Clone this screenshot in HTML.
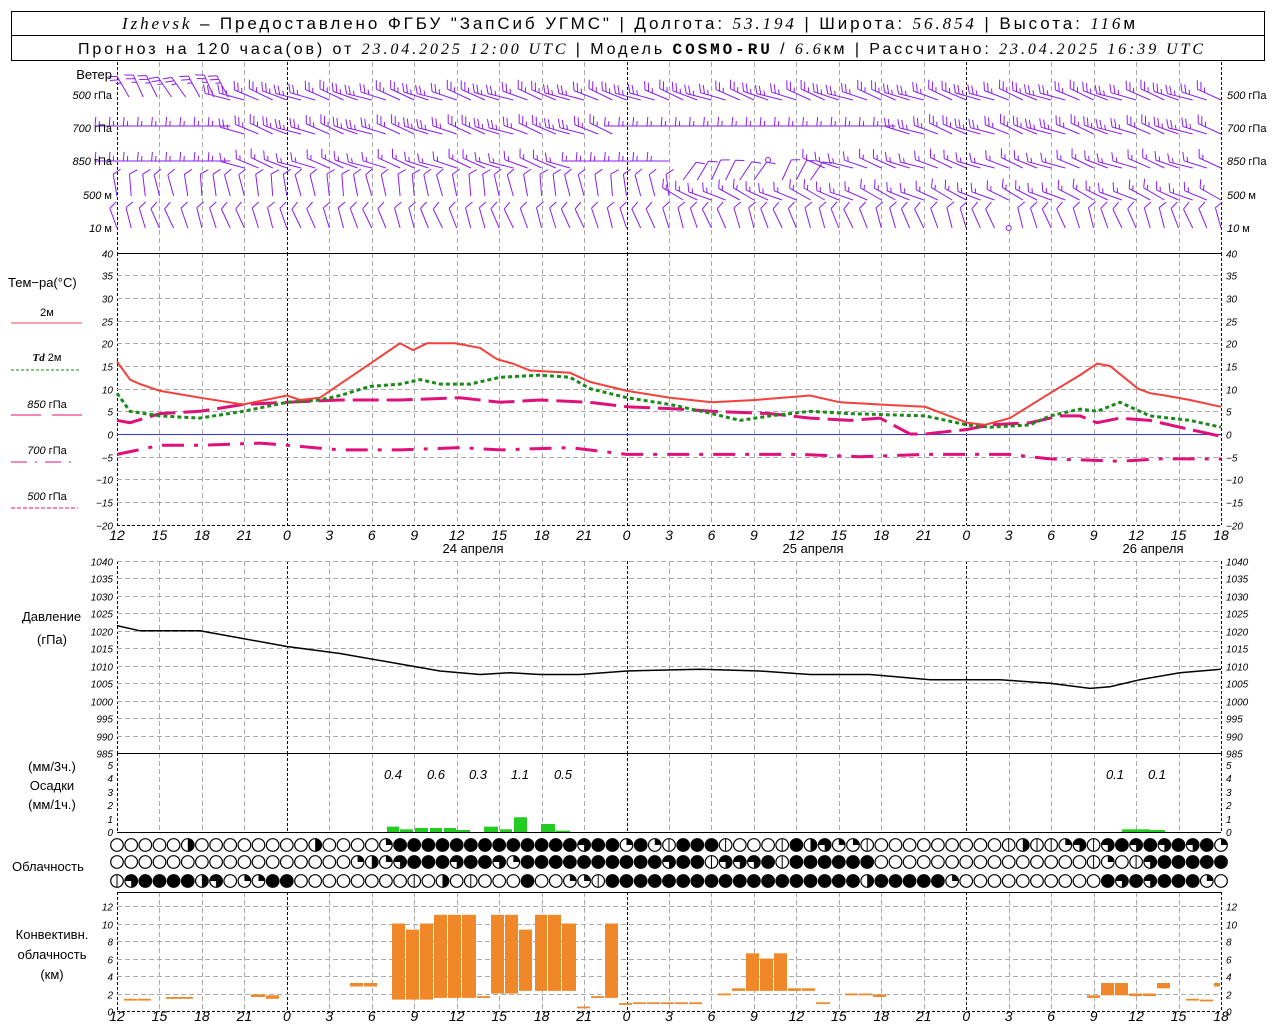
<!DOCTYPE html>
<html><head><meta charset="utf-8"><style>
html,body{margin:0;padding:0;background:#fff;}
svg{display:block;font-family:"Liberation Sans",sans-serif;}
.t{font-style:italic;font-size:10px;}
.lab{font-size:13px;}
</style></head><body>
<svg id="s" width="1280" height="1024" viewBox="0 0 1280 1024" xmlns="http://www.w3.org/2000/svg">
<rect x="0" y="0" width="1280" height="1024" fill="#fff"/>
<rect x="11.5" y="11.5" width="1253" height="49" fill="none" stroke="#000"/>
<line x1="11" y1="35.5" x2="1265" y2="35.5" stroke="#000"/>
<text x="122" y="29" font-size="17" textLength="1013" lengthAdjust="spacing"><tspan font-family="Liberation Serif" font-style="italic">Izhevsk</tspan> – Предоставлено ФГБУ "ЗапСиб УГМС" | Долгота: <tspan font-family="Liberation Serif" font-style="italic">53.194</tspan> | Широта: <tspan font-family="Liberation Serif" font-style="italic">56.854</tspan> | Высота: <tspan font-family="Liberation Serif" font-style="italic">116</tspan>м</text>
<text x="78" y="54" font-size="16" textLength="1125" lengthAdjust="spacing">Прогноз на 120 часа(ов) от <tspan font-family="Liberation Serif" font-style="italic">23.04.2025 12:00 UTC</tspan>  | Модель <tspan font-family="Liberation Mono" font-weight="bold">COSMO-RU</tspan> / <tspan font-family="Liberation Serif" font-style="italic">6.6</tspan>км | Рассчитано: <tspan font-family="Liberation Serif" font-style="italic">23.04.2025 16:39 UTC</tspan></text>
<g id="grid"></g>
<g id="data"></g>
<g class="lab">
<text x="112" y="79" text-anchor="end">Ветер</text>
<text x="8" y="287">Тем−ра(°С)</text>
<text x="47" y="316" text-anchor="middle" font-size="11">2м</text>
<line x1="11" y1="323" x2="82" y2="323" stroke="#f44" stroke-width="1"/>
<text x="47" y="361" text-anchor="middle" font-size="11"><tspan font-family="Liberation Serif" font-style="italic" font-weight="bold">Td</tspan>  2м</text>
<line x1="11" y1="370" x2="80" y2="370" stroke="#1a8a1a" stroke-dasharray="3,2"/>
<text x="47" y="408" text-anchor="middle" font-size="11"><tspan font-style="italic">850</tspan> гПа</text>
<line x1="11" y1="415" x2="41" y2="415" stroke="#e0107a"/><line x1="52" y1="415" x2="82" y2="415" stroke="#e0107a"/>
<text x="47" y="454" text-anchor="middle" font-size="11"><tspan font-style="italic">700</tspan> гПа</text>
<line x1="11" y1="462" x2="78" y2="462" stroke="#e0107a" stroke-dasharray="16,8,2,8"/>
<text x="47" y="500" text-anchor="middle" font-size="11"><tspan font-style="italic">500</tspan> гПа</text>
<line x1="11" y1="508" x2="78" y2="508" stroke="#e0107a" stroke-dasharray="4,2"/>
<text x="22" y="621">Давление</text>
<text x="52" y="644" text-anchor="middle">(гПа)</text>
<text x="52" y="771" text-anchor="middle">(мм/3ч.)</text>
<text x="52" y="790" text-anchor="middle">Осадки</text>
<text x="52" y="809" text-anchor="middle">(мм/1ч.)</text>
<text x="12" y="871">Облачность</text>
<text x="52" y="939" text-anchor="middle">Конвективн.</text>
<text x="52" y="959" text-anchor="middle">облачность</text>
<text x="52" y="979" text-anchor="middle">(км)</text>
<g font-size="11">
<text x="112" y="99" text-anchor="end"><tspan font-style="italic">500</tspan> гПа</text>
<text x="112" y="132" text-anchor="end"><tspan font-style="italic">700</tspan> гПа</text>
<text x="112" y="165" text-anchor="end"><tspan font-style="italic">850</tspan> гПа</text>
<text x="112" y="199" text-anchor="end"><tspan font-style="italic">500</tspan> м</text>
<text x="112" y="232" text-anchor="end"><tspan font-style="italic">10</tspan>   м</text>
<text x="1227" y="99"><tspan font-style="italic">500</tspan> гПа</text>
<text x="1227" y="132"><tspan font-style="italic">700</tspan> гПа</text>
<text x="1227" y="165"><tspan font-style="italic">850</tspan> гПа</text>
<text x="1227" y="199"><tspan font-style="italic">500</tspan> м</text>
<text x="1227" y="232"><tspan font-style="italic">10</tspan>   м</text>
</g>
<text x="473" y="553" text-anchor="middle">24 апреля</text>
<text x="813" y="553" text-anchor="middle">25 апреля</text>
<text x="1153" y="553" text-anchor="middle">26 апреля</text>
<g font-style="italic" font-size="13" text-anchor="middle">
<text x="393" y="779">0.4</text><text x="436" y="779">0.6</text><text x="478" y="779">0.3</text>
<text x="520" y="779">1.1</text><text x="563" y="779">0.5</text><text x="1115" y="779">0.1</text><text x="1157" y="779">0.1</text>
</g>
</g>
<g id="ticks"></g>
</svg>
<script>
function X(i){return 117+i*1104/78;}
var G=document.getElementById('grid'),D=document.getElementById('data'),T=document.getElementById('ticks');
var gs="",ds="",ts="";
function ln(x1,y1,x2,y2,st){return '<line x1="'+x1+'" y1="'+y1+'" x2="'+x2+'" y2="'+y2+'" '+st+'/>';}
var gray='stroke="#aaa" stroke-dasharray="5,3"', blk='stroke="#000" stroke-dasharray="3,2"';
var panels=[[62,253],[253,525],[561,753],[753,832],[892,1011]];
panels.forEach(function(p){
 for(var h=0;h<=78;h+=3){var x=Math.round(X(h))+.5;
  var st=(h==12||h==36||h==60)?blk:gray; if(h==0||h==78)st=blk;
  gs+=ln(x,p[0],x,p[1],st);}
});
function TY(t){return 434-t*4.533;}
for(var t=-20;t<=40;t+=5){var y=Math.round(TY(t))+.5;
 if(t<40&&t>-20)gs+=ln(117,y,1221,y,gray);
 ts+='<text class="t" x="113" y="'+(y+4)+'" text-anchor="end">'+(t<0?'−'+(-t):t)+'</text>';
 ts+='<text class="t" x="1226" y="'+(y+4)+'">'+(t<0?'−'+(-t):t)+'</text>';}
gs+=ln(117,253.5,1221,253.5,'stroke="#000"')+ln(117,525.5,1221,525.5,blk)+ln(117,434.5,1221,434.5,'stroke="#33f" stroke-width="1"');
function PY(p){return 561+(1040-p)*3.491;}
for(var p=985;p<=1040;p+=5){var y=Math.round(PY(p))+.5;
 if(p>985)gs+=ln(117,y,1221,y,gray);
 ts+='<text class="t" x="113" y="'+(y+4)+'" text-anchor="end" font-size="9">'+p+'</text>';
 ts+='<text class="t" x="1226" y="'+(y+4)+'" font-size="9">'+p+'</text>';}
gs+=ln(117,753.5,1221,753.5,'stroke="#000"')+ln(117,832.5,1221,832.5,'stroke="#000"')+ln(117,892.5,1221,892.5,'stroke="#000"')+ln(117,1011.5,1221,1011.5,blk);
for(var v=0;v<=5;v++){var y=Math.round(832-v*13.4);
 ts+='<text class="t" x="113" y="'+(y+4)+'" text-anchor="end">'+v+'</text><text class="t" x="1226" y="'+(y+4)+'">'+v+'</text>';}
function CY(k){return 1011-k*8.75;}
for(var k=0;k<=12;k+=2){var y=Math.round(CY(k))+.5;
 if(k>0)gs+=ln(117,y,1221,y,gray);
 ts+='<text class="t" x="113" y="'+(y+4)+'" text-anchor="end">'+k+'</text><text class="t" x="1226" y="'+(y+4)+'">'+k+'</text>';}
var hl=[12,15,18,21,0,3,6,9,12,15,18,21,0,3,6,9,12,15,18,21,0,3,6,9,12,15,18];
hl.forEach(function(h,j){var x=X(j*3);
 ts+='<text x="'+x+'" y="540" text-anchor="middle" font-style="italic" font-size="14">'+h+'</text>';
 ts+='<text x="'+x+'" y="1021" text-anchor="middle" font-style="italic" font-size="14">'+h+'</text>';});
function poly(pts,fy,st){return '<polyline fill="none" points="'+pts.map(function(q){return q[0]+','+fy(q[1]).toFixed(1)}).join(' ')+'" '+st+'/>';}
var red=[[117,16],[130,12],[140,11],[160,9.5],[200,8],[243,6.5],[287,8.5],[300,7.5],[320,8],[400,20],[413,18.5],[427,20],[455,20],[480,19],[497,16.5],[513,15.5],[530,14],[570,13.5],[590,11.5],[627,9.5],[670,8],[712,7],[755,7.5],[810,8.5],[840,7],[880,6.5],[925,6],[967,2.5],[985,2],[1010,3.5],[1050,9],[1080,13],[1097,15.5],[1110,15],[1138,10],[1150,9],[1165,8.5],[1190,7.5],[1221,6]];
var grn=[[117,9],[130,5],[160,4],[200,3.5],[243,5],[287,7],[320,7.5],[340,8.5],[370,10.5],[400,11],[420,12],[440,11],[470,11],[500,12.5],[540,13],[570,12.5],[590,10],[627,8],[670,6.5],[712,4.5],[740,3],[770,4],[810,5],[850,4.5],[925,4],[967,2],[990,1.5],[1030,2],[1050,4],[1080,5.5],[1097,5],[1120,7],[1150,4],[1190,3],[1221,1.5]];
var p850=[[117,3],[130,2.5],[160,4.5],[200,5],[243,6.5],[287,7],[340,7.5],[400,7.5],[460,8],[500,7],[540,7.5],[590,7],[627,6],[680,5.5],[712,5],[770,4.5],[810,3.5],[850,3],[880,3.5],[910,0],[925,0],[967,1],[990,2],[1030,2.5],[1060,4],[1080,4],[1097,2.5],[1120,3.5],[1150,3],[1190,1],[1221,-0.5]];
var p700=[[117,-4.5],[160,-2.5],[200,-2.5],[260,-2],[287,-2.5],[340,-3.5],[400,-3.5],[460,-3],[500,-3.5],[570,-3],[627,-4.5],[700,-4.5],[800,-4.5],[860,-5],[925,-4.5],[1010,-4.5],[1050,-5.5],[1120,-6],[1160,-5.5],[1221,-5.5]];
ds+=poly(p700,TY,'stroke="#e0107a" stroke-width="3" stroke-dasharray="22,10,4,10"');
ds+=poly(p850,TY,'stroke="#e0107a" stroke-width="3" stroke-dasharray="26,8"');
ds+=poly(grn,TY,'stroke="#1a8a1a" stroke-width="3" stroke-dasharray="4,3"');
ds+=poly(red,TY,'stroke="#f4403a" stroke-width="2"');
var pr=[[117,1021.5],[140,1020],[200,1020],[287,1015.5],[340,1013.5],[400,1010.5],[440,1008.5],[480,1007.5],[510,1008],[540,1007.5],[580,1007.5],[627,1008.5],[700,1009],[760,1008.5],[810,1007.5],[870,1007.5],[930,1006],[1000,1006],[1050,1005],[1090,1003.5],[1110,1004],[1140,1006],[1180,1008],[1221,1009]];
ds+=poly(pr,PY,'stroke="#000" stroke-width="1.5"');
[[387,399,.4],[400,413,.2],[415,428,.3],[430,442,.3],[444,456,.3],[456,470,.15],[484,498,.4],[500,512,.2],[514,527,1.1],[541,555,.6],[556,570,.1],[1122,1136,.2],[1136,1150,.2],[1150,1165,.15]].forEach(function(b){
 var h=b[2]*13.4;ds+='<rect x="'+b[0]+'" y="'+(832-h)+'" width="'+(b[1]-b[0])+'" height="'+h+'" fill="#22cc22"/>';});
[[124,138,1.2,1.4],[138,152,1.2,1.4],[166,194,1.4,1.6],[251,266,1.6,1.9],[266,280,1.4,1.8],[350,364,2.8,3.2],[364,378,2.8,3.2],[392,406,1.3,10],[406,420,1.3,9.3],[420,434,1.3,10],[434,448,1.5,11],[448,462,1.5,11],[462,477,1.5,11],[477,491,1.5,1.7],[491,505,2,11],[505,519,2,11],[519,533,2.3,9.3],[535,548,2.3,11],[548,562,2.3,11],[562,577,2.3,10],[577,591,0.3,0.5],[591,605,1.5,1.7],[605,619,1.5,10],[619,633,0.7,0.9],[633,647,0.8,1],[647,661,0.8,1],[661,675,0.8,1],[675,689,0.8,1],[689,703,0.8,1],[718,732,1.8,2],[732,746,2.3,2.6],[746,760,2.3,6.6],[760,774,2.3,6],[774,788,2.3,6.6],[788,802,2.3,2.6],[802,816,2.3,2.6],[816,831,0.8,1],[845,859,1.8,2],[859,873,1.8,2],[873,887,1.6,1.9],[1087,1101,1.5,1.8],[1101,1115,1.8,3.2],[1115,1129,1.8,3.2],[1129,1143,1.7,2],[1143,1157,1.7,2],[1157,1171,2.6,3.2],[1186,1200,1.2,1.4],[1200,1214,1.1,1.3],[1214,1221,2.8,3.2]].forEach(function(b){
 var y1=CY(b[3]),y0=CY(b[2]);ds+='<rect x="'+b[0]+'" y="'+y1.toFixed(1)+'" width="'+(b[1]-b[0]-1)+'" height="'+(y0-y1).toFixed(1)+'" fill="#f0882a"/>';});
var rows=[
"000002000000002000014444444444444344141v444v000v42311v000000000v2vv13v3434343410",
"000000000000000001213444344314444444444344v3334v444444000000000000000v10v3444444444",
"v34444230114400000000v020v00040011v4444444444444444442444441000000000043434441001v"];
function circ(cx,cy,c){var r=6.3,s='<circle cx="'+cx.toFixed(1)+'" cy="'+cy+'" r="'+r+'" fill="'+(c=='4'?'#000':'#fff')+'" stroke="#000" stroke-width="1.2"/>';
 var a=cx.toFixed(1),l=(cx-r).toFixed(1),rr=(cx+r).toFixed(1);
 if(c=='1')s+='<path d="M'+a+','+cy+'V'+(cy-r)+'A'+r+','+r+' 0 0 1 '+rr+','+cy+'Z"/>';
 if(c=='2')s+='<path d="M'+a+','+(cy-r)+'A'+r+','+r+' 0 0 1 '+a+','+(cy+r)+'Z"/>';
 if(c=='3')s+='<path d="M'+a+','+cy+'H'+l+'A'+r+','+r+' 0 1 1 '+a+','+(cy+r)+'Z"/>';
 if(c=='v')s+='<line x1="'+a+'" y1="'+(cy-r)+'" x2="'+a+'" y2="'+(cy+r)+'" stroke="#000"/>';
 return s;}
[845,862,881].forEach(function(y,r){var str=rows[r];
 for(var i=0;i<79;i++){ds+=circ(X(i),y,str[i]||'0');}});
function barb(x,y,a,n,L,rot){var ar=a*Math.PI/180,ex=x+L*Math.cos(ar),ey=y+L*Math.sin(ar);
 var s='M'+x.toFixed(1)+','+y+'L'+ex.toFixed(1)+','+ey.toFixed(1);
 var fa=ar+(rot||65)*Math.PI/180;
 for(var k=0;k<n;k++){var d=L-k*4,px=x+d*Math.cos(ar),py=y+d*Math.sin(ar);
  var fl=(k==n-1&&n>1)?5:9;
  s+='M'+px.toFixed(1)+','+py.toFixed(1)+'l'+(fl*Math.cos(fa)).toFixed(1)+','+(fl*Math.sin(fa)).toFixed(1);}
 return s;}
var wp="";
for(var i=0;i<79;i++){var x=X(i),w=Math.sin(i*1.3)*6;
 if(i<8)wp+=barb(x+12,97,-120+w,3,24,-65);else wp+=barb(x,100,-160+w,3,26);
 if(i<9||(i>=36&&i<56))wp+=barb(x,126,180,2,22,95);else wp+=barb(x,134,-160+w,3,25);
 if(i<9||(i>=33&&i<40))wp+=barb(x,161,180,2,22,95);
 else if(i>=40&&i<50){if(i!=46)wp+=barb(x,180,-60+w,1,22);}
 else wp+=barb(x,168,-160+w,2,24);
 if(i<40)wp+=barb(x,196,-100+w,1,22);else wp+=barb(x,200,-155+w,2,24);
 if(i!=63)wp+=barb(x,228,-110+w,1,21);
}
ds+='<path d="'+wp+'" stroke="#8a1cf0" stroke-width="1" fill="none"/>';
ds+='<circle cx="'+X(46)+'" cy="160" r="2.5" fill="none" stroke="#8a1cf0"/><circle cx="'+X(63)+'" cy="228" r="2.5" fill="none" stroke="#8a1cf0"/>';
G.innerHTML=gs;D.innerHTML=ds;T.innerHTML=ts;
</script>
</body></html>
